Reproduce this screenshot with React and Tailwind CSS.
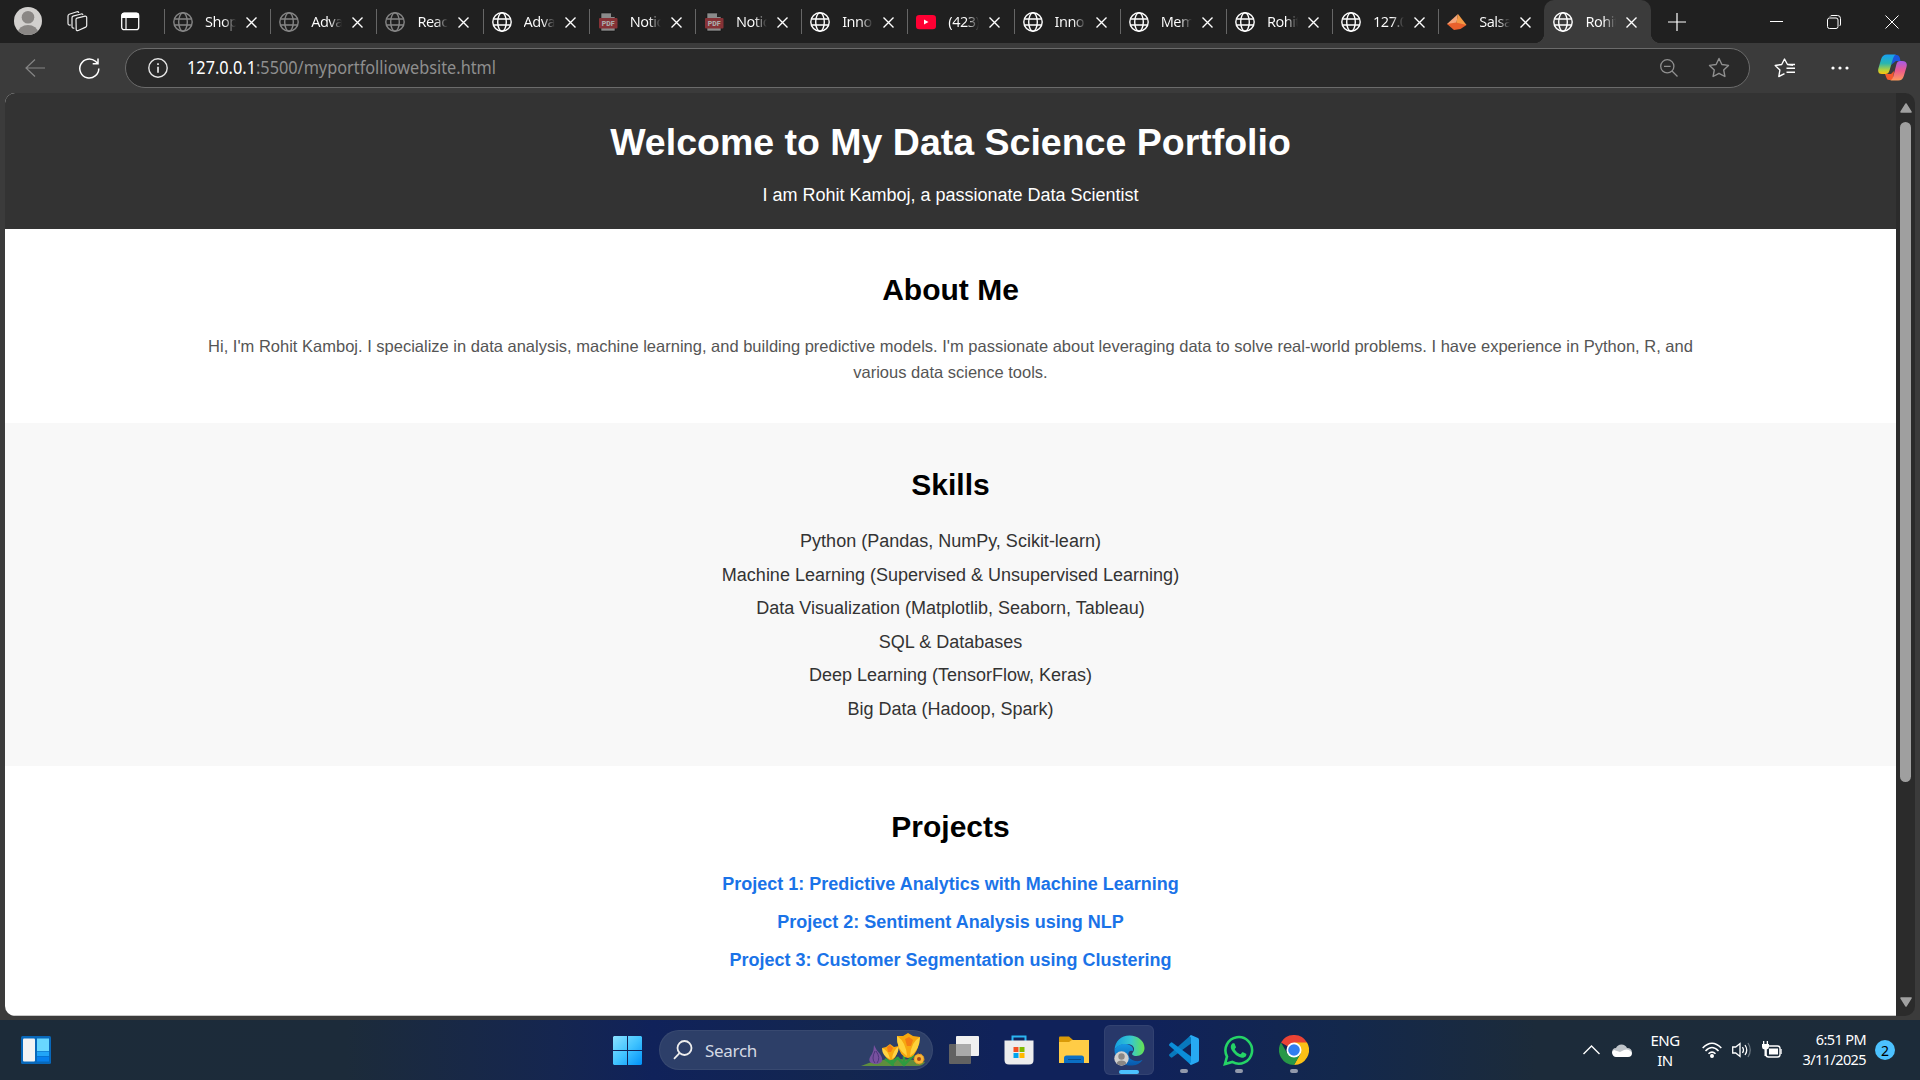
import React from "react";

const Globe = ({ dim }) => (
  <svg width="20" height="20" viewBox="0 0 20 20" fill="none" stroke={dim ? "#858585" : "#fff"} strokeWidth="1.4">
    <circle cx="10" cy="10" r="9.2" /><ellipse cx="10" cy="10" rx="4.3" ry="9.2" /><path d="M1.5 7h17M1.5 13h17" />
  </svg>
);
const Pdf = () => (
  <svg width="20" height="20" viewBox="0 0 20 20">
    <path d="M3 1h10l4 4v14H3z" fill="#8b8b8b" stroke="#111" strokeWidth=".6" /><path d="M13 1v4h4z" fill="#222" />
    <rect x="1" y="6" width="18.500" height="10.500" rx="1" fill="#863236" />
    <text x="10.200" y="13.800" textAnchor="middle" fontFamily="Roboto" fontWeight="900" fontSize="7" fill="#aaa">PDF</text>
  </svg>
);
const Youtube = () => (
  <svg width="20" height="20" viewBox="0 0 20 20"><rect y="3" width="20" height="14.300" rx="3.300" fill="#ff0033" /><path d="M8 7.500v5l4.500-2.500z" fill="#fff" /></svg>
);
const Salsa = () => (
  <svg width="20" height="20" viewBox="0 0 20 20">
    <path d="M11 2L0 12l9 2z" fill="#f5a57a" /><path d="M11 2L9 13l10.500 0z" fill="#f39a45" /><path d="M0 12l9-1.500 10.500 2.500-6 4-6.500 1z" fill="#e8602c" />
  </svg>
);
const tabs = [
  ["Shop", "dim"], ["Adva", "dim"], ["React", "dim"], ["Adva", "globe"], ["Notic", "pdf"], ["Notic", "pdf"], ["Inno", "globe"],
  ["(423)", "yt"], ["Inno", "globe"], ["Mem", "globe"], ["Rohit", "globe"], ["127.0", "globe"], ["Salsa", "salsa"], ["Rohit", "globe"],
];
function Tab({ label, kind, active }) {
  return (
    <div className={"relative flex h-[43px] w-[106.2px] shrink-0 items-center pl-[9px] " + (active ? "rounded-t-[10px] bg-[#3b3b3b]" : "")}>
      {!active && <span className="absolute left-0 top-[9px] h-[25px] w-px bg-[#666]" />}
      {active && <><span className="absolute -left-2.5 bottom-0 size-2.5 bg-[radial-gradient(circle_at_0_0,#202020_10px,#3b3b3b_10.5px)]" /><span className="absolute -right-2.5 bottom-0 size-2.5 bg-[radial-gradient(circle_at_100%_0,#202020_10px,#3b3b3b_10.5px)]" /></>}
      <span className="mt-px">{kind === "pdf" ? <Pdf /> : kind === "yt" ? <Youtube /> : kind === "salsa" ? <Salsa /> : <Globe dim={kind === "dim"} />}</span>
      <span className="mb-0.5 ml-3 w-[31px] overflow-hidden whitespace-nowrap bg-[linear-gradient(90deg,#fff_60%,transparent)] bg-clip-text text-[14.5px] leading-5 tracking-[-0.5px] text-transparent">{label}</span>
      <svg className="ml-[10px] mt-px" width="11" height="11" viewBox="0 0 11 11" stroke="#fff" strokeWidth="1.4"><path d="M.5.500l10 10M10.500.500l-10 10" /></svg>
    </div>
  );
}

function TitleBar() {
  return (
    <div className="flex h-[43px] items-center bg-[#202020]">
      <svg className="ml-3.5 mb-px" width="28" height="28" viewBox="0 0 28 28">
        <defs><clipPath id="avatar"><circle cx="14" cy="14" r="14" /></clipPath></defs>
        <g clipPath="url(#avatar)"><path fill="#d2d0ce" d="M0 0h28v28H0z" /><circle cx="14" cy="10.300" r="6.300" fill="#8a8785" /><ellipse cx="14" cy="25.500" rx="10" ry="7.500" fill="#8a8785" /></g>
      </svg>
      <svg className="ml-[25px]" width="21" height="21" viewBox="0 0 21 21" fill="none" stroke="#eee" strokeWidth="1.200" strokeLinejoin="round" strokeLinecap="round">
        <path d="M9 8.500q0-1 1-1.400l8-1.900q1.700-.200 1.700 1.400v8q0 1-1 1.500l-7.500 3.400q-2 .600-2-1.200z" />
        <path d="M6.800 17.200q-1.800.200-1.800-1.600V6.700q0-1.200 1.100-1.600L14.200 3q1.200-.200 1.600.500M3.500 14Q1 14.500 1 12.300V5q0-1.200 1.200-1.700L10 .800q1.300-.300 1.700.700" />
      </svg>
      <svg className="ml-[33px]" width="19" height="19" viewBox="0 0 19 19"><rect x=".7" y="1.200" width="17" height="16.500" rx="2.500" fill="none" stroke="#fff" strokeWidth="1.300" /><path d="M.500 6V3Q.500.700 3 .700h12.500Q18 .700 18 3v3z" fill="#fff" /><path d="M5 6v11.500" stroke="#fff" strokeWidth="1.200" /></svg>
      <div className="ml-6 flex">{tabs.map(([l, k], i) => <Tab key={i} label={l} kind={k} active={i === 13} />)}</div>
      <svg className="ml-[17px]" width="18" height="18" viewBox="0 0 18 18" stroke="#fff" strokeWidth="1.200"><path d="M9 0v18M0 9h18" /></svg>
      <svg className="ml-[84px]" width="13" height="13" viewBox="0 0 13 13" stroke="#fff"><path d="M0 6.500h13" /></svg>
      <svg className="ml-11" width="14" height="14" viewBox="0 0 14 14" fill="none" stroke="#fff"><rect x=".500" y="3" width="10.500" height="10.500" rx="2" /><path d="M3 1.500Q3.500.500 5 .500h5.500q3 0 3 3V9q0 1.500-1 2" /></svg>
      <svg className="ml-11" width="14" height="14" viewBox="0 0 14 14" stroke="#fff"><path d="M.500.500l13 13M13.500.500l-13 13" /></svg>
    </div>
  );
}

function Toolbar() {
  return (
    <div className="flex h-[49px] items-center bg-[#3b3b3b]">
      <svg className="ml-[25px]" width="20" height="18" viewBox="0 0 20 18" fill="none" stroke="#858585" strokeWidth="1.200"><path d="M20 9H1M10 .500L1 9l9 8.500" /></svg>
      <svg className="ml-[34px] mt-px" width="21" height="21" viewBox="0 0 21 21" fill="none" stroke="#fff" strokeWidth="1.500"><path d="M19.800 10.500a9.500 9.500 0 1 1-3.300-7.200L19 5.800M19 .500v5.300h-5.300" /></svg>
      <div className="ml-[25px] flex h-10 w-[1625px] items-center rounded-full border border-[#6b6b6b] bg-[#292929]">
        <svg className="ml-[22px]" width="20" height="20" viewBox="0 0 20 20" fill="none" stroke="#e6e6e6" strokeWidth="1.400"><circle cx="10" cy="10" r="9.200" /><path d="M10 8.700v6M10 5.200V7" strokeWidth="1.700" /></svg>
        <div className="ml-[19px] w-[310px] whitespace-nowrap text-[18px] leading-6 text-[#8f8f8f]"><svg className="block overflow-visible" width="310" height="24"><text x="0" y="18" fill="#8f8f8f" textLength="309" lengthAdjust="spacingAndGlyphs"><tspan fill="#fff">127.0.0.1</tspan>:5500/myportfolliowebsite.html</text></svg></div>
        <svg className="ml-auto" width="18" height="18" viewBox="0 0 18 18" fill="none" stroke="#909090" strokeWidth="1.300"><circle cx="7.300" cy="7.300" r="6.600" /><path d="M12 12l5.500 5.500M4 7.300h6.600" /></svg>
        <svg className="ml-[30px] mr-[19px]" width="22" height="22" viewBox="0 0 22 22" fill="none" stroke="#909090" strokeWidth="1.400" strokeLinejoin="round"><path d="M11 1.500l2.900 6 6.600.900-4.800 4.500 1.200 6.600-5.900-3.200-5.900 3.200 1.200-6.600L1.500 8.400l6.600-.900z" /></svg>
      </div>
      <svg className="ml-6" width="22" height="20" viewBox="0 0 22 20" fill="none" stroke="#fff" strokeWidth="1.400" strokeLinejoin="round"><path d="M19 7.300l-5.500-.800L10.500 1l-2.800 5.500-6.500 1 4.700 4.500L4.800 18.500l5.700-2.800M12.500 10.200H21M12.500 14.200H21M14 6.500h7" /></svg>
      <svg className="ml-[35px]" width="18" height="4" viewBox="0 0 18 4" fill="#fff"><circle cx="2" cy="2" r="1.600" /><circle cx="9" cy="2" r="1.600" /><circle cx="16" cy="2" r="1.600" /></svg>
      <svg className="ml-[29px]" width="29" height="27" viewBox="0 0 29 27">
        <defs>
          <linearGradient id="cpA" x1="0" y1="0" x2="0" y2="1"><stop stopColor="#17a0f3" /><stop offset=".45" stopColor="#28b5b0" /><stop offset=".8" stopColor="#b6d13a" /><stop offset="1" stopColor="#ffc20c" /></linearGradient>
          <linearGradient id="cpB" x1="0" y1="0" x2="0" y2="1"><stop stopColor="#a45be8" /><stop offset=".5" stopColor="#ec5a8c" /><stop offset="1" stopColor="#ff9a5c" /></linearGradient>
        </defs>
        <path d="M15 1h4q2 0 2.700 2.500L22.500 7H18l-5 4z" fill="#1b55dc" />
        <path d="M7 20h6l3-3-1 9H11q-2 0-2.700-2.500z" fill="#f4592c" />
        <path d="M9 .500h9q-2 .500-3 4l-3.500 12q-1 3.500-4 3.500H4q-5 0-3.500-6l2.700-9Q4.500.500 9 .500z" fill="url(#cpA)" />
        <path d="M20 7h4q6 0 4.500 6l-2.700 9q-1.300 4.500-5.500 4.500h-8q2-.500 3-4L18.500 10q.800-3 3.500-3z" fill="url(#cpB)" />
      </svg>
    </div>
  );
}

const H2 = ({ children }) => <h2 className="text-center text-[30px] font-bold leading-9 text-black">{children}</h2>;
const skills = ["Python (Pandas, NumPy, Scikit-learn)", "Machine Learning (Supervised & Unsupervised Learning)", "Data Visualization (Matplotlib, Seaborn, Tableau)", "SQL & Databases", "Deep Learning (TensorFlow, Keras)", "Big Data (Hadoop, Spark)"];
const projects = ["Project 1: Predictive Analytics with Machine Learning", "Project 2: Sentiment Analysis using NLP", "Project 3: Customer Segmentation using Clustering"];

function Page() {
  return (
    <div className="flex h-[928px] bg-[#3b3b3b] pb-1 pl-[5px] pt-px">
      <div className="flex w-[1910px] overflow-hidden rounded-[10px]">
        <main className="h-[923px] w-[1891px] overflow-hidden border-b border-[#c8c8c8] bg-white text-center font-['Liberation_Sans',Arial,sans-serif]">
          <header className="h-[136px] bg-[#333] pt-[27px] text-white">
            <h1 className="text-[37.500px] font-bold leading-[44px]">Welcome to My Data Science Portfolio</h1>
            <p className="mt-[21px] text-[18px] leading-5">I am Rohit Kamboj, a passionate Data Scientist</p>
          </header>
          <section className="h-[194px] pt-[43px]">
            <H2>About Me</H2>
            <p className="mx-auto mt-[25px] w-[1513px] text-[16.500px] leading-[26px] text-[#555]">Hi, I'm Rohit Kamboj. I specialize in data analysis, machine learning, and building predictive models. I'm passionate about leveraging data to solve real-world problems. I have experience in Python, R, and various data science tools.</p>
          </section>
          <section className="h-[343px] bg-[#f8f8f8] pt-[44px]">
            <H2>Skills</H2>
            <ul className="mt-[22px] text-[18px] leading-[33.600px] text-[#333]">{skills.map((s) => <li key={s}>{s}</li>)}</ul>
          </section>
          <section className="pt-[43px]">
            <H2>Projects</H2>
            <ul className="mt-5 text-[18px] font-bold leading-[38px] text-[#1a73e8]">{projects.map((s) => <li key={s}>{s}</li>)}</ul>
          </section>
        </main>
        <div className="flex w-[19px] flex-col items-center bg-[#2b2b2b]">
          <svg className="mt-[10px]" width="12" height="10" viewBox="0 0 12 10"><path d="M6 1l5 8H1z" fill="#a0a0a0" stroke="#a0a0a0" strokeWidth="1.500" strokeLinejoin="round" /></svg>
          <div className="mt-[9px] h-[660px] w-[11px] rounded-full bg-[#9f9f9f]" />
          <svg className="mb-[9px] mt-auto" width="12" height="10" viewBox="0 0 12 10"><path d="M6 9l5-8H1z" fill="#a0a0a0" stroke="#a0a0a0" strokeWidth="1.500" strokeLinejoin="round" /></svg>
        </div>
      </div>
    </div>
  );
}

const Crocus = () => (
  <svg width="66" height="34" viewBox="0 0 66 34">
    <path d="M0 33Q12 27 34 26q20 0 30 3-2 4-8 4z" fill="#5f8d3e" />
    <path d="M13 12q2 5 6 9 6 9-4 10-11-1-4-10 2-4 2-9z" fill="#77519f" /><path d="M14 18q-4 8 0 12M15 18q5 7 1 12" stroke="#4d357c" fill="none" />
    <path d="M30 24l2 9M24 26l7 5 5-6M43 23v10M36 24l7 8 10-10" stroke="#2f9b40" strokeWidth="2.500" fill="none" />
    <path d="M21 15l4-1 4-3 4 3 5-1-2 7q-2 7-6 7t-7-6z" fill="#f9a90f" /><path d="M21 15q6 2 8 11-8-3-8-11zM38 13q-6 4-7 13 6-3 7-13z" fill="#ffd345" /><path d="M26 14l3-2 3 3-2 4h-3z" fill="#f47c14" />
    <path d="M36 3l6 0 5-3 5 3 7 1-2 10q-3 10-10 11-8-1-10-13z" fill="#f7a810" /><path d="M36 3q9 6 10 20-11-7-10-20zM59 4q-9 5-10 19 10-6 10-19z" fill="#ffd23b" /><path d="M44 6l4-2 4 3-2 6h-4z" fill="#f47c14" />
    <circle cx="58" cy="26" r="5" fill="#f8b637" stroke="#e2911c" strokeDasharray="2 1" /><circle cx="58" cy="26" r="2" fill="#a84817" />
  </svg>
);
const Dot = () => <span className="absolute bottom-0.5 left-1/2 h-1 w-2 -translate-x-1/2 rounded-full bg-[#9299ab]" />;
const TaskItem = ({ children, active, idle }) => (
  <div className={"relative flex h-[50px] w-[50px] shrink-0 items-center justify-center rounded-md " + (active ? "border border-white/5 bg-white/10" : "")}>
    {children}{idle && <Dot />}{active && <span className="absolute bottom-0 left-1/2 h-1 w-5 -translate-x-1/2 rounded-full bg-[#4cc2ff]" />}
  </div>
);

function Taskbar() {
  return (
    <div className="flex h-[60px] items-center bg-[linear-gradient(90deg,#1c2b39_0%,#1c2b3a_18%,#152650_29%,#10225a_34%,#13264f_44%,#10225a_52%,#10225a_60%,#13284c_70%,#1c2b3a_80%,#1c2b39_100%)] text-white">
      <svg className="ml-[21px]" width="30" height="28" viewBox="0 0 30 28"><rect width="30" height="28" rx="1.500" fill="#0868ba" /><rect x="2" y="2.500" width="12" height="23" rx="1" fill="#f3f3f3" /><path d="M16 2.500h12V15H16z" fill="#69d7ff" /><path d="M16 15.500h12V20H16z" fill="#22a5f7" /><path d="M16 20.500h12v5H16z" fill="#0780ed" /></svg>
      <svg className="ml-[562px]" width="29" height="29" viewBox="0 0 29 29"><defs><linearGradient id="win" gradientUnits="userSpaceOnUse" x1="0" y1="0" x2="29" y2="29"><stop stopColor="#8be1ff" /><stop offset=".5" stopColor="#42c4ff" /><stop offset="1" stopColor="#0091f8" /></linearGradient></defs><path d="M1 0h13v14H0V1zM15 0h13l1 1v13H15zM0 15h14v14H1l-1-1zM15 15h14v13l-1 1H15z" fill="url(#win)" /></svg>
      <div className="ml-[17px] flex h-10 w-[274px] items-center rounded-full border border-white/5 bg-[#31436a]/90">
        <svg className="ml-[13px]" width="20" height="20" viewBox="0 0 20 20" fill="none" stroke="#eee" strokeWidth="1.800"><circle cx="11.500" cy="8" r="7" /><path d="M6.500 13.200L1 18.800" /></svg>
        <span className="ml-3 mt-0.5 text-[17px] tracking-[-0.3px] text-[#d4d9e3]">Search</span><span className="ml-auto mr-[5px]"><Crocus /></span>
      </div>
      <div className="ml-[6px] flex gap-[5px]">
        <TaskItem><svg width="30" height="28" viewBox="0 0 30 28"><rect y="8" width="22" height="20" rx="1" fill="#626262" /><rect x="7" width="23" height="20" rx="1" fill="#f0f0f0" /><path d="M7 8h15v12H7z" fill="#aaa" /></svg></TaskItem>
        <TaskItem><svg width="30" height="30" viewBox="0 0 30 30"><path d="M8.500 7V1.500h13V7" fill="none" stroke="#2bb5f2" strokeWidth="2" /><path d="M.500 5.500h29V25q0 4.500-4.500 4.500H5Q.500 29.500.500 25z" fill="#ededed" /><path d="M9.500 12h5v5h-5z" fill="#f25022" /><path d="M15.500 12h5v5h-5z" fill="#7fba00" /><path d="M9.500 18h5v5h-5z" fill="#00a4ef" /><path d="M15.500 18h5v5h-5z" fill="#ffb900" /></svg></TaskItem>
        <TaskItem><svg width="30" height="28" viewBox="0 0 30 28"><path d="M0 1.500Q0 .500 1 .500h9L14 4v8H0z" fill="#d99a08" /><path d="M0 6h10l3-2h17v23H0z" fill="#ffcc46" /><path d="M5 27v-5q0-2.500 2.500-2.500h15Q25 19.500 25 22v5z" fill="#0b6fc4" /><path d="M9 23.500h13" stroke="#084b8a" /></svg></TaskItem>
        <TaskItem active><svg width="31" height="31" viewBox="0 0 31 31"><defs><linearGradient id="edA"><stop stopColor="#149fe3" /><stop offset=".55" stopColor="#37c7cf" /><stop offset="1" stopColor="#67e34e" /></linearGradient><linearGradient id="edB" x1="0" y1="0" x2="0" y2="1"><stop stopColor="#1799e5" /><stop offset="1" stopColor="#0757ab" /></linearGradient></defs>
          <path d="M.500 15C1 6 7 .500 15.500.500S30.500 6 30.500 13c0 5-4 8-8 8-4 0-5-2-4-3 4-5 0-9-5-9C7 9 3 11 .500 15z" fill="url(#edA)" /><path d="M.500 15C3 10 8 8.500 12 9c5 .500 8 4 7 7-6-2-7 8 2 10 4 .500 6-.500 7.500-1C25 30 19 31 15 30.500 6 30 .500 23 .500 15z" fill="url(#edB)" />
          <circle cx="7.500" cy="23.500" r="7.200" fill="#d2d0ce" /><circle cx="7.500" cy="21.500" r="3.200" fill="#8a8785" /><path d="M2.500 28.500q1-3 5-3t5 3q-5 4-10 0z" fill="#8a8785" /></svg></TaskItem>
        <TaskItem idle><svg width="30" height="30" viewBox="0 0 30 30"><path d="M22 0v8.500L3.500 22.300q-1 .700-1.800 0L.400 21q-.800-.900 0-1.800z" fill="#0879bd" /><path d="M22 30v-8.500L3.500 7.700q-1-.700-1.800 0L.400 9q-.800.900 0 1.800z" fill="#0b8dd8" /><path d="M22 0l7 3q1 .500 1 2v20q0 1.500-1 2l-7 3-1.500-1.500 1.500-1V2.500l-1.500-1z" fill="#27a9f2" /></svg></TaskItem>
        <TaskItem idle><svg className="mr-px" width="31" height="31" viewBox="0 0 24 24" fill="#25d366"><path d="M17.472 14.382c-.297-.149-1.758-.867-2.030-.967-.273-.099-.471-.148-.670.150-.197.297-.767.966-.940 1.164-.173.199-.347.223-.644.075-.297-.150-1.255-.463-2.390-1.475-.883-.788-1.480-1.761-1.653-2.059-.173-.297-.018-.458.130-.606.134-.133.298-.347.446-.520.149-.174.198-.298.298-.497.099-.198.050-.371-.025-.520-.075-.149-.669-1.612-.916-2.207-.242-.579-.487-.500-.669-.510-.173-.008-.371-.010-.570-.010-.198 0-.520.074-.792.372-.272.297-1.040 1.016-1.040 2.479 0 1.462 1.065 2.875 1.213 3.074.149.198 2.096 3.200 5.077 4.487.709.306 1.262.489 1.694.625.712.227 1.360.195 1.871.118.571-.085 1.758-.719 2.006-1.413.248-.694.248-1.289.173-1.413-.074-.124-.272-.198-.570-.347z" /><path d="M1.500 22.500l1.600-5.800A10.300 10.300 0 1 1 7.200 20.900z" fill="none" stroke="#25d366" strokeWidth="2" /></svg></TaskItem>
        <TaskItem idle><svg width="30" height="30" viewBox="0 0 30 30"><path d="M15 15L2 7.500A15 15 0 0 1 28 7.500z" fill="#ea4335" /><path d="M28 7.500A15 15 0 0 1 15 30l6.500-11.500L15 7.500z" fill="#fbc116" /><path d="M2 7.500A15 15 0 0 0 15 30l6.500-11.300L15 22l-6.500-3.300z" fill="#279847" /><circle cx="15" cy="15" r="7.500" fill="#fff" /><circle cx="15" cy="15" r="5.800" fill="#327ef0" /></svg></TaskItem>
      </div>
      <svg className="ml-[264px]" width="17" height="10" viewBox="0 0 17 10" fill="none" stroke="#fff" strokeWidth="1.400"><path d="M.500 9l8-8 8 8" /></svg>
      <svg className="ml-3" width="20" height="14" viewBox="0 0 20 14"><path d="M4 5a6 6 0 0 1 11 0q5 0 5 5l-14-1-6 1q0-5 4-5z" fill="#bfc4c9" /><path d="M2 12l10-5q5-2 8 3 0 4-4 4H4q-3 0-4-4 0-2 2-3l6 2z" fill="#fff" /></svg>
      <div className="ml-[17px] w-[32px] text-center text-[15px] leading-5 tracking-[-0.5px]">ENG<br />IN</div>
      <svg className="ml-[21px]" width="20" height="16" viewBox="0 0 20 16" fill="none" stroke="#fff" strokeWidth="1.600"><path d="M.700 6Q10-3.500 19.300 6M3.500 9Q10 2 16.500 9M6.500 11.800q3.500-3.500 7 0" /><circle cx="10" cy="14" r="1.200" fill="#fff" /></svg>
      <svg className="ml-2.5" width="20" height="16" viewBox="0 0 20 16" fill="none" stroke="#fff" strokeWidth="1.300"><path d="M.700 5h3L8 1.500v13L3.700 11h-3zM10.500 5q2 3 0 6M13 3q3.500 5 0 10" /><path d="M16 1q4.500 7 0 14" stroke="#69747e" /></svg>
      <svg className="ml-2.5" width="21" height="18" viewBox="0 0 21 18"><rect x="4" y="5" width="14" height="11" rx="2.500" fill="none" stroke="#fff" strokeWidth="1.400" /><path d="M7 7.500h9v6H7zM18.500 8h1.200v5h-1.200zM0 3h7v3q0 2-2.500 2.500V15h-2V8.500Q0 8 0 6zM1 0h1.300v3H1zM4.700 0H6v3H4.700z" fill="#fff" /></svg>
      <div className="mb-0.5 ml-auto text-right text-[14.5px] leading-5 tracking-[-0.6px]">6:51 PM<br />3/11/2025</div>
      <div className="ml-[9px] mr-[25px] flex size-5 items-center justify-center rounded-full bg-[#4cc2ff] text-[14px] text-black">2</div>
    </div>
  );
}

export default function App() {
  return (
    <div className="h-[1080px] w-[1920px] overflow-hidden bg-[#3b3b3b] font-['Noto_Sans','Open_Sans',sans-serif]">
      <TitleBar /><Toolbar /><Page /><Taskbar />
    </div>
  );
}
